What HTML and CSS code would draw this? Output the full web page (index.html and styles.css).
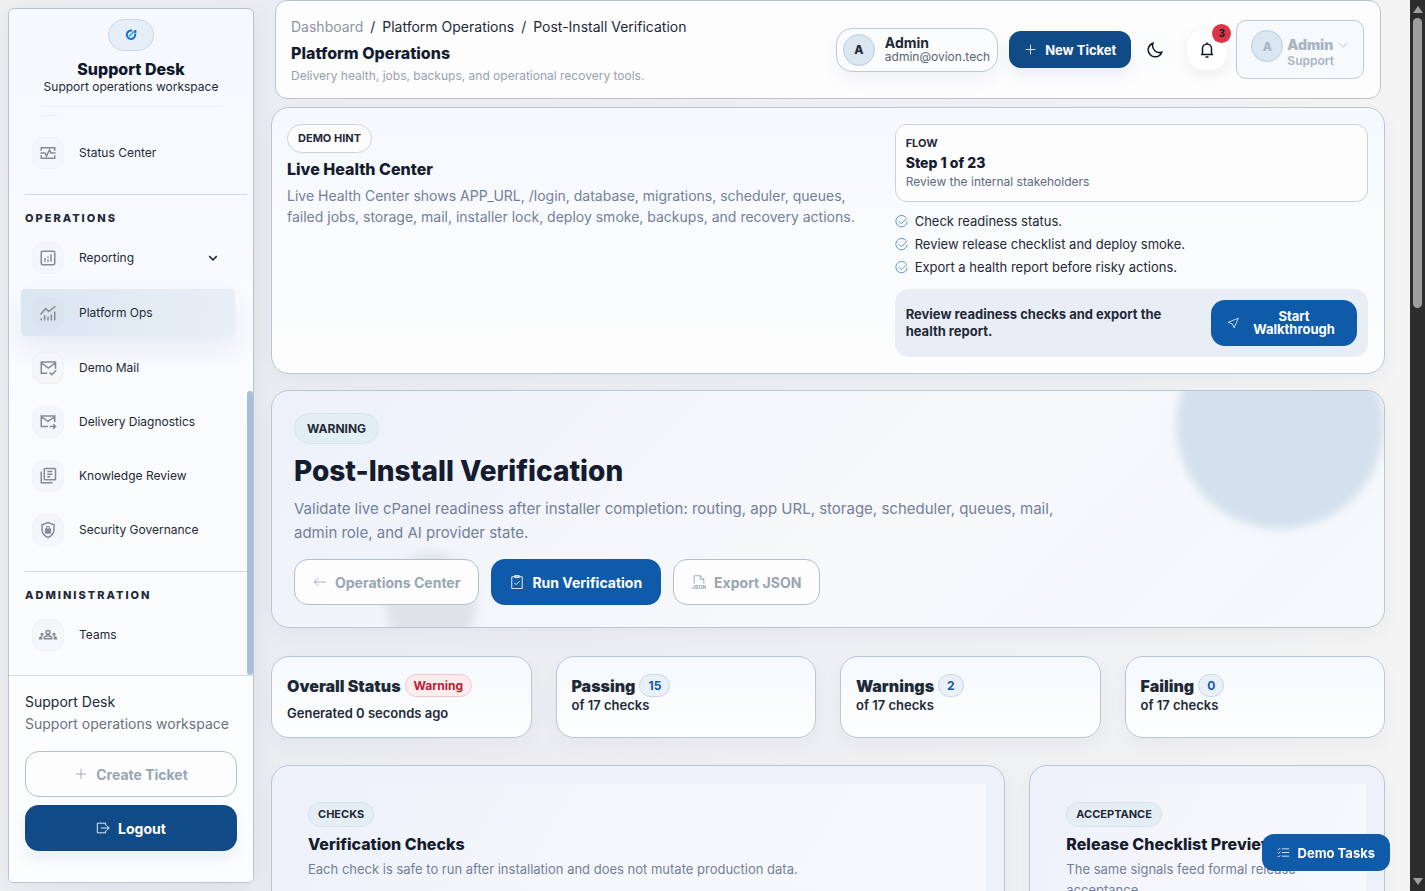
FILE: index.html
```html
<!DOCTYPE html>
<html lang="en">
<head>
  <meta charset="UTF-8" />
  <meta name="viewport" content="width=device-width, initial-scale=1.0"/>
  <title>Post-Install Verification - Support Desk</title>
  <link rel="stylesheet" href="styles.css">
</head>
<body>
  <aside class="sidebar">
    <div class="brand">
      <div class="brand-logo">
        <svg width="12" height="12" viewBox="0 0 12 12"><path d="M7 1.7A4.2 4.2 0 1 0 10.1 5"/><path class="logo-tick" d="M4 7.5L9.500 2"/><path d="M10.4 1v3.500"/></svg>
      </div>
      <strong>Support Desk</strong>
      <span>Support operations workspace</span>
    </div>

    <nav class="side-nav">
      <a href="#" class="nav-item">
        <span class="nav-icon"><svg viewBox="0 0 24 24"><path d="M3 9V5h18v4M3 15v4h18v-4M2 12h6l2 4 4-8 2 4h6"/></svg></span>
        Status Center
      </a>
      <h6>Operations</h6>
      <a href="#" class="nav-item">
        <span class="nav-icon"><svg viewBox="0 0 24 24"><rect x="3" y="3" width="18" height="18" rx="2"/><path d="M8 12v5M12 14v3M12 10v2M16 7v10"/></svg></span>
        Reporting
        <svg class="chevron" viewBox="0 0 16 16"><path d="M3 5.500l5 5 5-5"/></svg>
      </a>
      <a href="#" class="nav-item active">
        <span class="nav-icon"><svg viewBox="0 0 24 24"><path d="M2 14l7-8 4 4 9-7M3 22v-3M7.500 22v-7M12 22v-5M16.500 22v-8M21 22V10"/></svg></span>
        Platform Ops
      </a>
      <a href="#" class="nav-item">
        <span class="nav-icon"><svg viewBox="0 0 24 24"><path d="M11 19H3V4h19v9M3 5l9.500 7L22 5M14 18l3 3 6-6"/></svg></span>
        Demo Mail
      </a>
      <a href="#" class="nav-item">
        <span class="nav-icon"><svg viewBox="0 0 24 24"><path d="M12 18H3V4h18v8M3 5l9 6 9-6M14 18h8M19 15l3 3-3 3"/></svg></span>
        Delivery Diagnostics
      </a>
      <a href="#" class="nav-item">
        <span class="nav-icon"><svg viewBox="0 0 24 24"><rect x="7" y="2" width="15" height="15" rx="1"/><path d="M3 6v15h15M11 6h7M11 9.500h7M11 13h4"/></svg></span>
        Knowledge Review
      </a>
      <a href="#" class="nav-item">
        <span class="nav-icon"><svg viewBox="0 0 24 24"><path d="M12 2l8 3v6c0 5-3.400 9-8 11-4.600-2-8-6-8-11V5z"/><path d="M9 11h6v5H9z" fill="currentColor"/><path d="M10 11V9a2 2 0 0 1 4 0v2" stroke-width="1.500"/></svg></span>
        Security Governance
      </a>
      <h6>Administration</h6>
      <a href="#" class="nav-item">
        <span class="nav-icon"><svg viewBox="0 0 24 24"><circle cx="12" cy="8.500" r="2.500"/><path d="M7 17v-1c0-2 2-3 5-3s5 1 5 3v1z"/><g fill="currentColor" stroke="none"><circle cx="4" cy="11" r="2"/><circle cx="20" cy="11" r="2"/><path d="M0 18v-2c0-1.500 2-2.500 5-2.200-.7 1.200-.8 2.200-.8 4.200zM24 18v-2c0-1.500-2-2.500-5-2.200.7 1.200.8 2.200.8 4.200z"/></g></svg></span>
        Teams
      </a>
      <div class="nav-thumb"></div>
    </nav>

    <div class="side-footer">
      <p>Support Desk</p>
      <p class="muted">Support operations workspace</p>
      <button type="button" class="btn btn-light"><svg viewBox="0 0 16 16"><path d="M8 2v12M2 8h12"/></svg>Create Ticket</button>
      <button type="button" class="btn btn-dark"><svg viewBox="0 0 16 16"><path d="M11 5V2.500H1.500v11H11V11M5.500 8H15M12 5l3 3-3 3"/></svg>Logout</button>
    </div>
  </aside>

  <main class="content">
    <header class="topbar">
      <div class="topbar-title">
        <div class="crumbs"><a href="#" class="crumb-home">Dashboard</a><span>/</span><a href="#">Platform Operations</a><span>/</span><a href="#">Post-Install Verification</a></div>
        <h1>Platform Operations</h1>
        <p>Delivery health, jobs, backups, and operational recovery tools.</p>
      </div>
      <div class="topbar-actions">
        <div class="user-chip">
          <span class="avatar">A</span>
          <div><strong>Admin</strong><small>admin@ovion.tech</small></div>
        </div>
        <button type="button" class="btn btn-dark btn-small"><svg viewBox="0 0 16 16"><path d="M8 2v12M2 8h12"/></svg>New Ticket</button>
        <button type="button" class="icon-btn theme-btn" aria-label="Toggle theme"><svg viewBox="0 0 16 16"><path d="M6 1.200A7 7 0 1 0 14.800 10.200 7 7 0 0 1 6 1.200z"/></svg></button>
        <button type="button" class="icon-btn bell-btn" aria-label="Notifications">
          <svg viewBox="0 0 16 16"><path d="M2 12.500h12M3.500 12.500V6.500C3.500 4 5.500 2 8 2s4.500 2 4.500 4.500v6"/><path d="M8 2V.5M6.500 15h3"/></svg>
          <span class="badge">3</span>
        </button>
        <button type="button" class="profile">
          <span class="avatar">A</span>
          <span class="profile-text"><b>Admin</b><svg viewBox="0 0 16 16"><path d="M2 5l6 6 6-6"/></svg><small>Support</small></span>
        </button>
      </div>
    </header>

    <section class="card hint">
      <div class="hint-copy">
        <span class="pill pill-white">DEMO HINT</span>
        <h2>Live Health Center</h2>
        <p>Live Health Center shows APP_URL, /login, database, migrations, scheduler, queues, failed jobs, storage, mail, installer lock, deploy smoke, backups, and recovery actions.</p>
      </div>
      <div class="hint-flow">
        <div class="flow-box">
          <b>FLOW</b>
          <strong>Step 1 of 23</strong>
          <span>Review the internal stakeholders</span>
        </div>
        <ul class="checks">
          <li><svg viewBox="0 0 16 16"><path d="M13.500 3.200A7 7 0 1 0 15 8M4.500 7.500l3.200 3.200L15 4"/></svg>Check readiness status.</li>
          <li><svg viewBox="0 0 16 16"><path d="M13.500 3.200A7 7 0 1 0 15 8M4.500 7.500l3.200 3.200L15 4"/></svg>Review release checklist and deploy smoke.</li>
          <li><svg viewBox="0 0 16 16"><path d="M13.500 3.200A7 7 0 1 0 15 8M4.500 7.500l3.200 3.200L15 4"/></svg>Export a health report before risky actions.</li>
        </ul>
        <div class="callout">
          <p>Review readiness checks and export the health report.</p>
          <button type="button" class="btn btn-blue"><svg viewBox="0 0 16 16"><path d="M15 1.500L1.500 7.200l5.700 2 2.300 5.300z"/></svg><span>Start Walkthrough</span></button>
        </div>
      </div>
    </section>

    <section class="card hero">
      <span class="pill pill-large">WARNING</span>
      <h2>Post-Install Verification</h2>
      <p>Validate live cPanel readiness after installer completion: routing, app URL, storage, scheduler, queues, mail, admin role, and AI provider state.</p>
      <div class="hero-actions">
        <button type="button" class="btn btn-light"><svg viewBox="0 0 16 16"><path d="M15 8H1M6 3.500L1.500 8 6 12.500"/></svg>Operations Center</button>
        <button type="button" class="btn btn-blue"><svg viewBox="0 0 16 16"><path d="M2 2h12v13.500H2zM5.500 .5h5v2.500h-5zM5 9l2 2 4-4"/></svg>Run Verification</button>
        <button type="button" class="btn btn-light"><svg viewBox="0 0 16 16"><path d="M2.500 10V.8h7l4 4V10M9.500 1v4h4"/><text x="0" y="16">JSON</text></svg>Export JSON</button>
      </div>
    </section>

    <section class="stats">
      <div class="card stat stat-overall"><div><b>Overall Status</b><span class="tag tag-red">Warning</span></div><p>Generated 0 seconds ago</p></div>
      <div class="card stat"><div><b>Passing</b><span class="tag">15</span></div><p>of 17 checks</p></div>
      <div class="card stat"><div><b>Warnings</b><span class="tag">2</span></div><p>of 17 checks</p></div>
      <div class="card stat"><div><b>Failing</b><span class="tag">0</span></div><p>of 17 checks</p></div>
    </section>

    <section class="panels">
      <div class="card panel">
        <div class="panel-body">
          <span class="pill">CHECKS</span>
          <h3>Verification Checks</h3>
          <p>Each check is safe to run after installation and does not mutate production data.</p>
        </div>
      </div>
      <div class="card panel">
        <div class="panel-body">
          <span class="pill">ACCEPTANCE</span>
          <h3>Release Checklist Preview</h3>
          <p>The same signals feed formal release acceptance.</p>
        </div>
      </div>
    </section>

    <button type="button" class="btn btn-blue btn-small demo-tasks"><svg viewBox="0 0 16 16"><path d="M6 3.500h9M6 8h9M6 12.500h9M1 3.500l1 1 2-2M1 8l1 1 2-2M1 12.500l1 1 2-2"/></svg>Demo Tasks</button>
  </main>

  <div class="scrollbar" aria-hidden="true">
    <i class="arrow-up"></i>
    <div class="scroll-thumb"></div>
    <i class="arrow-down"></i>
  </div>
</body>
</html>
```
FILE: styles.css
```css
* {
  box-sizing: border-box;
}
body {
  margin: 0;
  display: flex;
  height: 100vh;
  overflow: hidden;
  font-family: Inter, sans-serif;
  font-size: 13px;
  color: #1f2937;
  background: linear-gradient(90deg, #eff0f2, #eaedf1 280px, #eff1f3 75%, #f4f4f4);
}
h1, h2, h3, h6, p, ul {
  margin: 0;
  padding: 0;
}
h1, h2, h3 {
  color: #151c2e;
  font-weight: 800;
  font-size: 16px;
  line-height: 24px;
}
a {
  color: inherit;
  text-decoration: none;
}
svg {
  flex: none;
  fill: none;
  stroke: currentColor;
}
small {
  font-size: 12px;
}

/* sidebar */
.sidebar {
  display: flex;
  flex-direction: column;
  flex: none;
  width: 246px;
  margin: 8px 0 8px 8px;
  border: 1px solid #b9c4d2;
  border-radius: 6px;
  background: linear-gradient(#f5f9fd, #fafbfd 50%, #fafbfd);
  box-shadow: 0 6px 24px rgba(30, 50, 90, 0.08);
  overflow: hidden;
}
.brand {
  display: flex;
  flex-direction: column;
  align-items: center;
  margin: 0 32px;
  padding: 10px 0;
  border-bottom: 1px solid #edf2f6;
  white-space: nowrap;
}
.brand-logo {
  display: flex;
  align-items: center;
  justify-content: center;
  width: 46px;
  height: 32px;
  margin-bottom: 9px;
  border: 1px solid #c9d9e8;
  border-radius: 16px;
  background: #e6eff7;
  color: #1b6fc0;
}
.brand-logo svg {
  stroke-width: 2;
}
.logo-tick {
  stroke: #4db1ea;
}
.brand strong {
  font-size: 16px;
  font-weight: 800;
  line-height: 18px;
  color: #10172a;
}
.brand span {
  font-size: 12px;
  line-height: 18px;
}
.side-nav {
  position: relative;
  flex: 1;
  display: flex;
  flex-direction: column;
  gap: 7px;
  padding: 22px 18px 0 12px;
}
.side-nav::before {
  content: "";
  position: absolute;
  top: 8px;
  left: 32px;
  width: 16px;
  border-top: 1px solid #e6ecf2;
}
.side-nav h6 {
  margin: 11px -12px 0 4px;
  padding-top: 14px;
  border-top: 1px solid #d3dae4;
  font-size: 11px;
  line-height: 18px;
  font-weight: 800;
  letter-spacing: 2px;
  text-transform: uppercase;
}
.nav-item {
  display: flex;
  align-items: center;
  gap: 15px;
  height: 47px;
  padding: 0 16px 0 11px;
  border-radius: 4px;
  font-size: 12px;
}
.nav-item.active {
  margin: 1px 0;
  background: linear-gradient(100deg, #dbe6f1, #e9eff7);
  box-shadow: 0 12px 24px rgba(70, 110, 190, 0.1);
}
.nav-icon {
  display: flex;
  align-items: center;
  justify-content: center;
  width: 32px;
  height: 32px;
  border: 1px solid #eff2f5;
  border-radius: 12px;
  background: #f4f7f9;
  color: #858b93;
}
.active .nav-icon {
  background: #d8e4ee;
  border-color: #d8e4ee;
}
.nav-icon svg {
  width: 18px;
  height: 18px;
  stroke-width: 2;
}
.chevron {
  width: 12px;
  height: 12px;
  margin-left: auto;
  stroke-width: 2;
}
.nav-thumb {
  position: absolute;
  right: 0;
  bottom: 0;
  width: 6px;
  height: 50%;
  border-radius: 3px;
  background: #a9bfd5;
}
.side-footer {
  padding: 15px 16px 31px;
  border-top: 1px solid #d3dde6;
  background: #fcfdfe;
  font-size: 14px;
  line-height: 22px;
}
.side-footer .btn {
  width: 100%;
  margin-top: 8px;
}
.side-footer .btn-light {
  margin-top: 16px;
}
.muted {
  color: #6b7280;
}

/* buttons */
.btn {
  display: inline-flex;
  align-items: center;
  justify-content: center;
  gap: 8px;
  height: 46px;
  padding: 0 18px;
  border: 1px solid transparent;
  border-radius: 14px;
  font: 700 14px Inter, sans-serif;
  white-space: nowrap;
  cursor: pointer;
}
.btn svg {
  width: 14px;
  height: 14px;
}
.btn-light {
  background: #fdfdfe;
  border-color: #b3bfcc;
  color: #98a5b4;
}
.btn-dark {
  background: #104b87;
  color: #fff;
  box-shadow: 0 8px 16px rgba(16, 75, 135, 0.08);
}
.btn-blue {
  background: #105ba9;
  color: #fff;
}
.btn-small {
  height: 37px;
  padding: 0 14px;
  border-radius: 12px;
  font-size: 13px;
}
.btn-small svg {
  width: 13px;
  height: 13px;
}
.btn text {
  font: 700 6px Inter, sans-serif;
  fill: currentColor;
  stroke: none;
}

/* main column */
.content {
  flex: 1;
  min-width: 0;
  padding: 0 25px 0 17px;
}
.topbar {
  display: flex;
  justify-content: space-between;
  align-items: center;
  height: 99px;
  margin: 0 4px 8px;
  padding: 0 16px 0 15px;
  border: 1px solid #bac3cf;
  border-radius: 12px;
  background: #fdfdfe;
}
.crumbs {
  display: flex;
  gap: 7px;
  font-size: 14px;
  line-height: 24px;
}
.crumb-home {
  color: #8f959d;
}
.topbar h1 {
  line-height: 28px;
}
.topbar p {
  font-size: 12px;
  line-height: 18px;
  color: #9aa1ac;
}
.topbar-actions {
  display: flex;
  align-items: center;
}
.avatar {
  display: flex;
  align-items: center;
  justify-content: center;
  width: 32px;
  height: 32px;
  border: 1px solid #bccddd;
  border-radius: 50%;
  background: #dae6f1;
  font-weight: 800;
  font-size: 12px;
}
.user-chip {
  display: flex;
  align-items: center;
  gap: 10px;
  height: 44px;
  margin-right: 11px;
  padding: 0 7px 0 6px;
  border: 1px solid #bcc8d6;
  border-radius: 16px;
  background: #fbfcfe;
  box-shadow: 0 8px 18px rgba(30, 50, 90, 0.05);
}
.user-chip strong {
  display: block;
  font-size: 14px;
  font-weight: 700;
  line-height: 15px;
}
.user-chip small {
  display: block;
  line-height: 14px;
  color: #5b6470;
}
.icon-btn {
  position: relative;
  display: flex;
  align-items: center;
  justify-content: center;
  width: 40px;
  height: 40px;
  padding: 0;
  border: 0;
  border-radius: 16px;
  background: #fff;
  color: #10172a;
}
.icon-btn svg {
  width: 16px;
  height: 16px;
  stroke-width: 1.5;
}
.theme-btn {
  margin: 0 12px 0 4px;
  background: #fbfcfe;
}
.bell-btn {
  margin-right: 9px;
  box-shadow: 0 4px 14px rgba(60, 30, 40, 0.08);
}
.badge {
  position: absolute;
  top: -6px;
  right: -4px;
  width: 19px;
  height: 19px;
  border-radius: 50%;
  background: #dc3548;
  font-size: 11px;
  font-weight: 700;
  line-height: 19px;
}
.profile {
  display: flex;
  align-items: flex-start;
  gap: 4px;
  height: 59px;
  padding: 9px 14px 0;
  border: 1px solid #bccad9;
  border-radius: 10px;
  background: #f7fafd;
  font: 700 14px Inter, sans-serif;
  color: #a9b5c3;
}
.profile-text {
  display: grid;
  grid-template-columns: auto 12px;
  column-gap: 3px;
  align-items: center;
  padding-top: 7px;
  line-height: 16px;
  text-align: left;
}
.profile svg {
  width: 12px;
  height: 12px;
}
.profile small {
  font-weight: 600;
}

.card {
  border: 1px solid #b9c6d5;
  border-radius: 18px;
  box-shadow: 0 8px 20px rgba(30, 50, 90, 0.04);
}
.pill {
  display: inline-block;
  padding: 0 9px;
  border: 1px solid #d6e3ee;
  border-radius: 16px;
  background: #e6eef5;
  font-size: 11px;
  font-weight: 700;
  line-height: 23px;
}
.pill-white {
  padding: 0 10px;
  background: #fdfdfe;
  border-color: #ccd4dd;
  line-height: 27px;
}
.pill-large {
  padding: 0 12px;
  background: #e4eef5;
  font-size: 12px;
  line-height: 29px;
}

.hint {
  display: grid;
  grid-template-columns: 5fr 4fr;
  gap: 16px;
  padding: 16px 16px 16px 15px;
  background: linear-gradient(#f5f9fd, #fdfdfd);
}
.hint h2 {
  margin: 4px 0;
}
.hint-copy p {
  font-size: 14px;
  line-height: 21px;
  color: #73809a;
}
.flow-box {
  display: flex;
  flex-direction: column;
  height: 78px;
  padding: 9px 10px;
  border: 1px solid #c9d2dc;
  border-radius: 12px;
  background: #fdfdfe;
}
.flow-box b {
  font-size: 11px;
  line-height: 18px;
}
.flow-box strong {
  font-size: 14px;
  font-weight: 800;
  line-height: 22px;
  color: #151c2e;
}
.flow-box span {
  font-size: 12px;
  line-height: 16px;
  color: #5d6980;
}
.checks {
  list-style: none;
  margin: 8px 0 10px;
}
.checks li {
  display: flex;
  align-items: center;
  gap: 7px;
  line-height: 23px;
}
.checks svg {
  width: 13px;
  height: 13px;
  color: #3b7fc0;
}
.callout {
  display: flex;
  align-items: center;
  justify-content: space-between;
  padding: 11px;
  border-radius: 14px;
  background: #e9eef6;
}
.callout p {
  width: 60%;
  font-weight: 700;
  line-height: 17px;
}
.callout .btn {
  width: 146px;
  padding: 0 15px;
  font-size: 13px;
  line-height: 13px;
  white-space: normal;
}
.callout .btn span {
  flex: 1;
}
.callout .btn svg {
  width: 12px;
  height: 12px;
}

.hero {
  position: relative;
  margin: 16px 0 28px;
  padding: 22px;
  background: linear-gradient(135deg, #ecf1fb, #f7f8fa 50%, #f4f9fd);
  overflow: hidden;
}
.hero::before,
.hero::after {
  content: "";
  position: absolute;
  border-radius: 50%;
  filter: blur(5px);
}
.hero::before {
  top: -70px;
  right: 0;
  width: 208px;
  height: 208px;
  background: #d3e0ed;
}
.hero::after {
  left: 114px;
  bottom: -26px;
  width: 90px;
  height: 100px;
  background: #dfe2e7;
}
.hero > * {
  position: relative;
  z-index: 1;
}
.hero h2 {
  margin: 7px 0 6px;
  font-size: 28px;
  line-height: 40px;
}
.hero p {
  max-width: 760px;
  font-size: 15px;
  line-height: 24px;
  color: #73809a;
}
.hero-actions {
  display: flex;
  gap: 12px;
  margin-top: 14px;
}

.stats {
  display: grid;
  grid-template-columns: repeat(4, 1fr);
  gap: 24px;
}
.stat {
  min-height: 82px;
  padding: 17px 15px 16px;
  background: linear-gradient(#f5f9fd, #fdfefe);
  font-weight: 600;
}
.stat div {
  display: flex;
  align-items: center;
  gap: 4px;
  height: 23px;
}
.stat b {
  font-size: 16px;
}
.stat p {
  line-height: 16px;
}
.stat-overall p {
  margin-top: 8px;
}
.tag {
  padding: 0 8px;
  border: 1px solid #c6d7e9;
  border-radius: 12px;
  background: #eaf0f7;
  color: #105ba9;
  font-size: 12px;
  font-weight: 700;
  line-height: 21px;
}
.tag-red {
  border-color: #f5c6cb;
  background: #fdecee;
  color: #b32434;
}

.panels {
  display: grid;
  grid-template-columns: 735fr 356fr;
  gap: 24px;
  margin-top: 27px;
}
.panel {
  padding: 18px;
  background: #ecf1fa;
}
.panel-body {
  min-height: 240px;
  padding: 18px;
  background: linear-gradient(120deg, #ecf1fb, #f6f7fa 45%, #f7f9fc);
}
.panel h3 {
  margin: 5px 0 3px;
}
.panel p {
  font-size: 13px;
  line-height: 21px;
  color: #73809a;
}
.demo-tasks {
  position: fixed;
  right: 35px;
  bottom: 20px;
  z-index: 5;
}

/* page scrollbar */
.scrollbar {
  display: flex;
  flex-direction: column;
  align-items: center;
  flex: none;
  width: 15px;
  padding: 6px 0;
  background: #2c2c2c;
}
.arrow-up,
.arrow-down {
  border: 5px solid transparent;
  border-top-width: 0;
  border-bottom: 7px solid #9f9f9f;
}
.arrow-down {
  margin-top: auto;
  transform: rotate(180deg);
}
.scroll-thumb {
  width: 9px;
  height: 33%;
  margin-top: 5px;
  border-radius: 5px;
  background: #9f9f9f;
}
```
